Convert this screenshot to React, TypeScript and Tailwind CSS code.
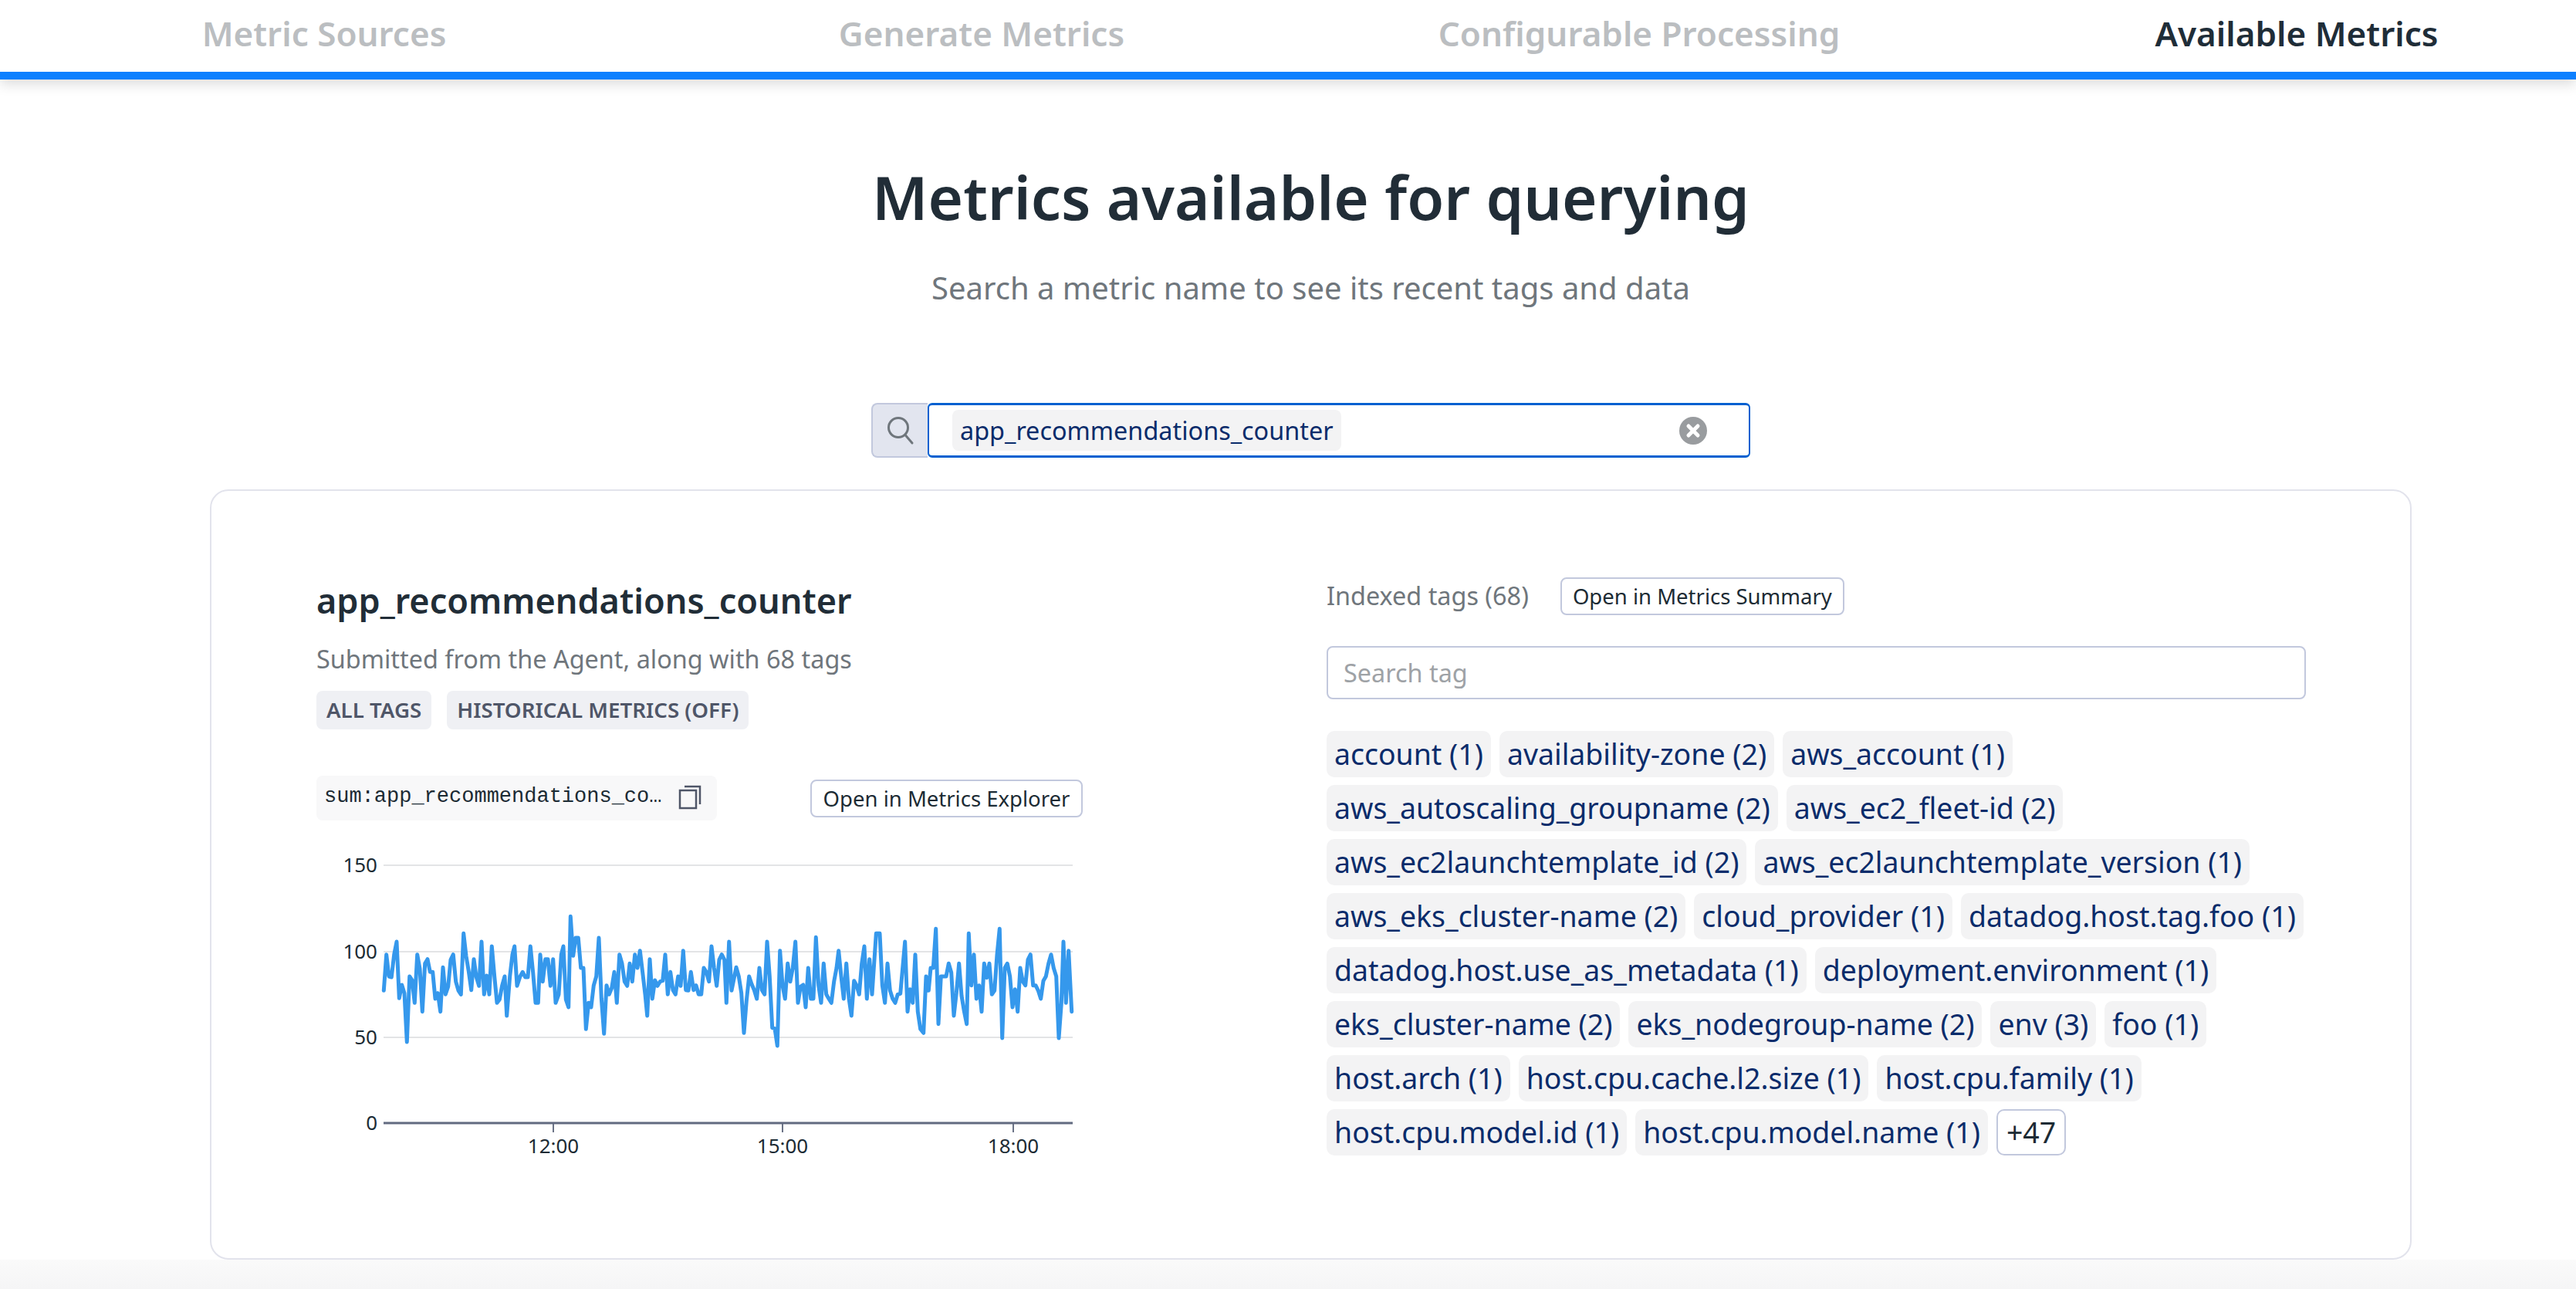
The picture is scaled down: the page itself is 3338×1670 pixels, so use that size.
const A: [number, number][] = [[52,310],[62,170],[72,255],[82,258],[92,170],[102,120],[112,340],[122,288],[132,320],[142,510],[152,255],[162,270],[172,358],[182,170],[192,225],[202,392],[212,205],[222,188],[232,238],[242,238],[252,342],[262,320],[272,392],[282,220],[292,325],[302,295],[312,190],[322,170],[332,275],[342,310],[352,325],[362,88],[372,175],[382,235],[392,308],[402,188],[412,258],[422,292],[432,120],[442,325],[452,252],[462,325],[472,138],[482,255],[492,358],[502,345],[512,290],[522,255],[530,408],[542,255],[552,170],[560,138],[570,292],[582,255],[592,238],[602,258],[612,258],[622,138],[632,240],[642,358],[652,358],[660,170],[670,275],[680,188],[690,188],[700,292],[710,188],[720,358],[732,325],[742,170],[750,138],[760,345],[770,375],[778,22],[788,175],[798,105],[808,105],[818,222],[828,222],[838,460],[848,358],[858,375],[868,290],[878,255],[888,105],[898,340],[908,478],[918,290],[928,325],[938,300],[948,238],[958,358],[968,170],[978,205],[988,275],[998,292],[1008,205],[1018,275],[1028,170],[1038,222],[1048,155],[1058,240],[1068,325],[1076,408],[1086,188],[1096,342],[1106,270],[1116,292],[1126,275],[1136,272],[1146,170],[1156,325],[1166,238],[1176,308],[1186,325],[1196,255],[1206,292],[1216,155],[1226,308],[1236,310],[1246,238],[1256,308],[1266,290],[1276,325],[1286,325],[1296,222],[1306,238],[1316,275],[1326,138],[1336,222],[1346,292],[1356,190],[1366,170],[1376,190],[1384,358],[1394,120],[1404,310]];
const B: [number, number][] = [[12,220],[22,255],[32,320],[42,475],[52,350],[62,255],[72,285],[82,308],[92,342],[102,222],[112,308],[122,325],[132,120],[142,255],[152,455],[162,458],[172,525],[182,155],[192,290],[202,342],[212,205],[222,275],[232,222],[242,120],[252,358],[262,295],[272,288],[282,375],[292,222],[302,342],[312,342],[322,103],[332,290],[342,358],[352,205],[362,325],[372,342],[382,358],[392,275],[402,222],[410,155],[420,255],[430,342],[440,205],[450,340],[460,408],[470,272],[480,290],[490,325],[500,205],[510,138],[520,342],[530,188],[540,325],[556,88],[570,88],[580,290],[590,358],[600,205],[610,310],[620,342],[630,358],[640,325],[650,322],[668,120],[678,392],[688,305],[698,358],[708,170],[718,392],[728,460],[740,475],[750,255],[760,310],[768,222],[778,222],[788,70],[798,440],[808,255],[818,255],[828,255],[838,205],[848,240],[858,408],[868,320],[878,205],[888,330],[898,390],[908,440],[916,88],[926,290],[936,170],[946,342],[956,290],[966,392],[976,205],[986,260],[996,205],[1006,325],[1016,310],[1026,170],[1036,70],[1046,495],[1056,222],[1066,205],[1076,255],[1086,375],[1096,305],[1106,392],[1116,222],[1126,275],[1136,290],[1146,190],[1156,170],[1166,290],[1176,290],[1186,310],[1196,342],[1206,272],[1216,255],[1226,205],[1236,170],[1246,222],[1256,255],[1266,495],[1276,360],[1284,120],[1294,358],[1304,155],[1316,392]];

const linePoints = [
  ...A.map(([x, y]) => `${(480 + x / 3).toFixed(1)},${(1180 + y / 3).toFixed(1)}`),
  ...B.map(([x, y]) => `${(950 + x / 3).toFixed(1)},${(1180 + y / 3).toFixed(1)}`),
].join(" ");

const rows: string[][] = [
  ["account (1)", "availability-zone (2)", "aws_account (1)"],
  ["aws_autoscaling_groupname (2)", "aws_ec2_fleet-id (2)"],
  ["aws_ec2launchtemplate_id (2)", "aws_ec2launchtemplate_version (1)"],
  ["aws_eks_cluster-name (2)", "cloud_provider (1)", "datadog.host.tag.foo (1)"],
  ["datadog.host.use_as_metadata (1)", "deployment.environment (1)"],
  ["eks_cluster-name (2)", "eks_nodegroup-name (2)", "env (3)", "foo (1)"],
  ["host.arch (1)", "host.cpu.cache.l2.size (1)", "host.cpu.family (1)"],
  ["host.cpu.model.id (1)", "host.cpu.model.name (1)"],
];

function Chart() {
  const grid = [
    [1121, "150"],
    [1233, "100"],
    [1344, "50"],
  ] as const;
  const ticks = [
    [717, "12:00"],
    [1014, "15:00"],
    [1313, "18:00"],
  ] as const;
  return (
    <svg
      viewBox="400 1090 1030 420"
      width={1030}
      height={420}
      className="block -ml-[10px] mt-[27px]"
      style={{ fontFamily: "'Noto Sans', sans-serif" }}
    >
      {grid.map(([y, l]) => (
        <g key={l}>
          <line x1={497} x2={1390} y1={y} y2={y} stroke="#e3e4e6" strokeWidth={2} />
          <text x={489} y={y + 9} textAnchor="end" fontSize={26} fill="#1c2b34">{l}</text>
        </g>
      ))}
      <text x={489} y={1464} textAnchor="end" fontSize={26} fill="#1c2b34">0</text>
      {ticks.map(([x, l]) => (
        <g key={l}>
          <line x1={x} x2={x} y1={1455} y2={1467} stroke="#6b7386" strokeWidth={2} />
          <text x={x} y={1494} textAnchor="middle" fontSize={26} fill="#1c2b34">{l}</text>
        </g>
      ))}
      <line x1={497} x2={1390} y1={1455} y2={1455} stroke="#626a80" strokeWidth={3} />
      <polyline points={linePoints} fill="none" stroke="#3598ec" strokeWidth={5} strokeLinejoin="round" strokeLinecap="round" />
    </svg>
  );
}

export default function App() {
  return (
    <div className="relative h-[1670px] w-[3338px] overflow-hidden bg-white text-[#1c2b34] font-['Noto_Sans',sans-serif]">
      <header className="relative z-10 border-b-[10px] border-[#0d80ff] bg-white shadow-[0_6px_16px_rgba(0,0,0,0.14)]">
        <div className="flex h-[93px] -ml-[6px] items-center pb-[7px] text-[44px] font-semibold">
          <div className="w-[852px] shrink-0 text-center text-[#bbbec1]">Metric Sources</div>
          <div className="w-[852px] shrink-0 text-center text-[#bbbec1]">Generate Metrics</div>
          <div className="w-[852px] shrink-0 text-center text-[#bbbec1]">Configurable Processing</div>
          <div className="w-[852px] shrink-0 text-center text-[#1f2d38]">Available Metrics</div>
        </div>
      </header>

      <main className="ml-[272px] w-[2853px]">
        <h1 className="mt-[95px] h-[114px] text-center text-[78px] leading-[114px] font-semibold text-[#212d37]">
          Metrics available for querying
        </h1>
        <p className="mt-[31px] h-[60px] text-center text-[40px] leading-[60px] text-[#6f767c]">
          Search a metric name to see its recent tags and data
        </p>

        <div className="mt-[119px] ml-[857px] flex h-[71px] w-[1139px]">
          <div className="flex w-[73px] items-center justify-center rounded-l-[8px] border-2 border-r-0 border-[#c2c8dd] bg-[#e2e5ef]">
            <svg width="38" height="38" viewBox="0 0 38 38" fill="none" stroke="#6f767c" strokeWidth="3" strokeLinecap="round">
              <circle cx="16" cy="15" r="12.5" />
              <path d="M25 24.5 34 35" />
            </svg>
          </div>
          <div className="flex flex-1 items-center justify-between rounded-[6px] border-x-2 border-y-[3px] border-[#0060d0] bg-white pl-[30px] pr-[54px]">
            <span className="flex h-[53px] items-center rounded-[8px] bg-[#f3f3f4] px-[10px] text-[32.4px] text-[#0a2c6b]">
              app_recommendations_counter
            </span>
            <svg width="36" height="36" viewBox="0 0 36 36">
              <circle cx="18" cy="18" r="18" fill="#999c9f" />
              <path d="M12 12 24 24M24 12 12 24" stroke="#fff" strokeWidth="5" strokeLinecap="round" />
            </svg>
          </div>
        </div>

        <section className="mt-[41px] flex h-[998px] rounded-[24px] border-2 border-[#e2e3ec] bg-white pl-[136px] pt-[112px]">
          <div className="w-[993px] shrink-0">
            <h2 className="h-[60px] text-[45px] leading-[60px] font-semibold text-[#212d37]">app_recommendations_counter</h2>
            <p className="mt-[20px] h-[50px] text-[32.4px] leading-[50px] text-[#6f767c]">Submitted from the Agent, along with 68 tags</p>
            <div className="mt-[17px] flex gap-[20px]">
              <span className="flex h-[50px] items-center rounded-[8px] bg-[#eff0f4] px-[13px] text-[27.7px] font-semibold text-[#4f5668]">ALL TAGS</span>
              <span className="flex h-[50px] items-center rounded-[8px] bg-[#eff0f4] px-[13px] text-[27.7px] font-semibold text-[#4f5668]">HISTORICAL METRICS (OFF)</span>
            </div>
            <div className="mt-[60px] flex items-start justify-between">
              <div className="flex h-[58px] w-[519px] items-center gap-[22px] rounded-[8px] bg-[#f8f8f9] pb-[3px] pl-[10px] font-['Liberation_Mono',monospace] text-[27px] text-[#1c2b34]">
                <span>sum:app_recommendations_co…</span>
                <svg width="30" height="32" viewBox="0 0 30 32" fill="none" stroke="#4f5668" strokeWidth="2.5">
                  <rect x="2" y="7" width="21" height="23" />
                  <path d="M8 2H28V25" />
                </svg>
              </div>
              <button className="mt-[5px] flex h-[49px] w-[353px] items-center justify-center rounded-[8px] border-2 border-[#c2c8dd] bg-white text-[27.5px] text-[#1c2b34]">
                Open in Metrics Explorer
              </button>
            </div>
            <Chart />
          </div>

          <div className="ml-[316px] w-[1269px] shrink-0">
            <div className="flex h-[49px] items-center">
              <span className="pb-[2px] text-[32.4px] text-[#6f767c]">Indexed tags (68)</span>
              <button className="ml-[41px] flex h-[49px] w-[368px] items-center justify-center rounded-[8px] border-2 border-[#c2c8dd] bg-white text-[27.5px] text-[#1c2b34]">
                Open in Metrics Summary
              </button>
            </div>
            <div className="mt-[40px] flex h-[69px] items-center rounded-[8px] border-2 border-[#c2c8dd] bg-white pl-[20px] text-[32.4px] text-[#9ea2a6]">
              Search tag
            </div>
            <div className="mt-[41px] flex flex-col gap-[10px]">
              {rows.map((r, i) => (
                <div key={i} className="flex gap-[11px]">
                  {r.map((t) => (
                    <span key={t} className="flex h-[60px] items-center rounded-[10px] bg-[#f3f3f4] px-[10px] text-[37.45px] whitespace-nowrap text-[#0a2c6b]">{t}</span>
                  ))}
                  {i === 7 && (
                    <span className="flex h-[60px] w-[90px] items-center justify-center rounded-[10px] border-2 border-[#c2c8dd] bg-white text-[37.45px] text-[#1c2b34]">+47</span>
                  )}
                </div>
              ))}
            </div>
          </div>
        </section>
      </main>

      <div className="absolute inset-x-0 bottom-0 h-[38px] bg-gradient-to-b from-[#fafafa] to-[#f5f5f6]" />
    </div>
  );
}
